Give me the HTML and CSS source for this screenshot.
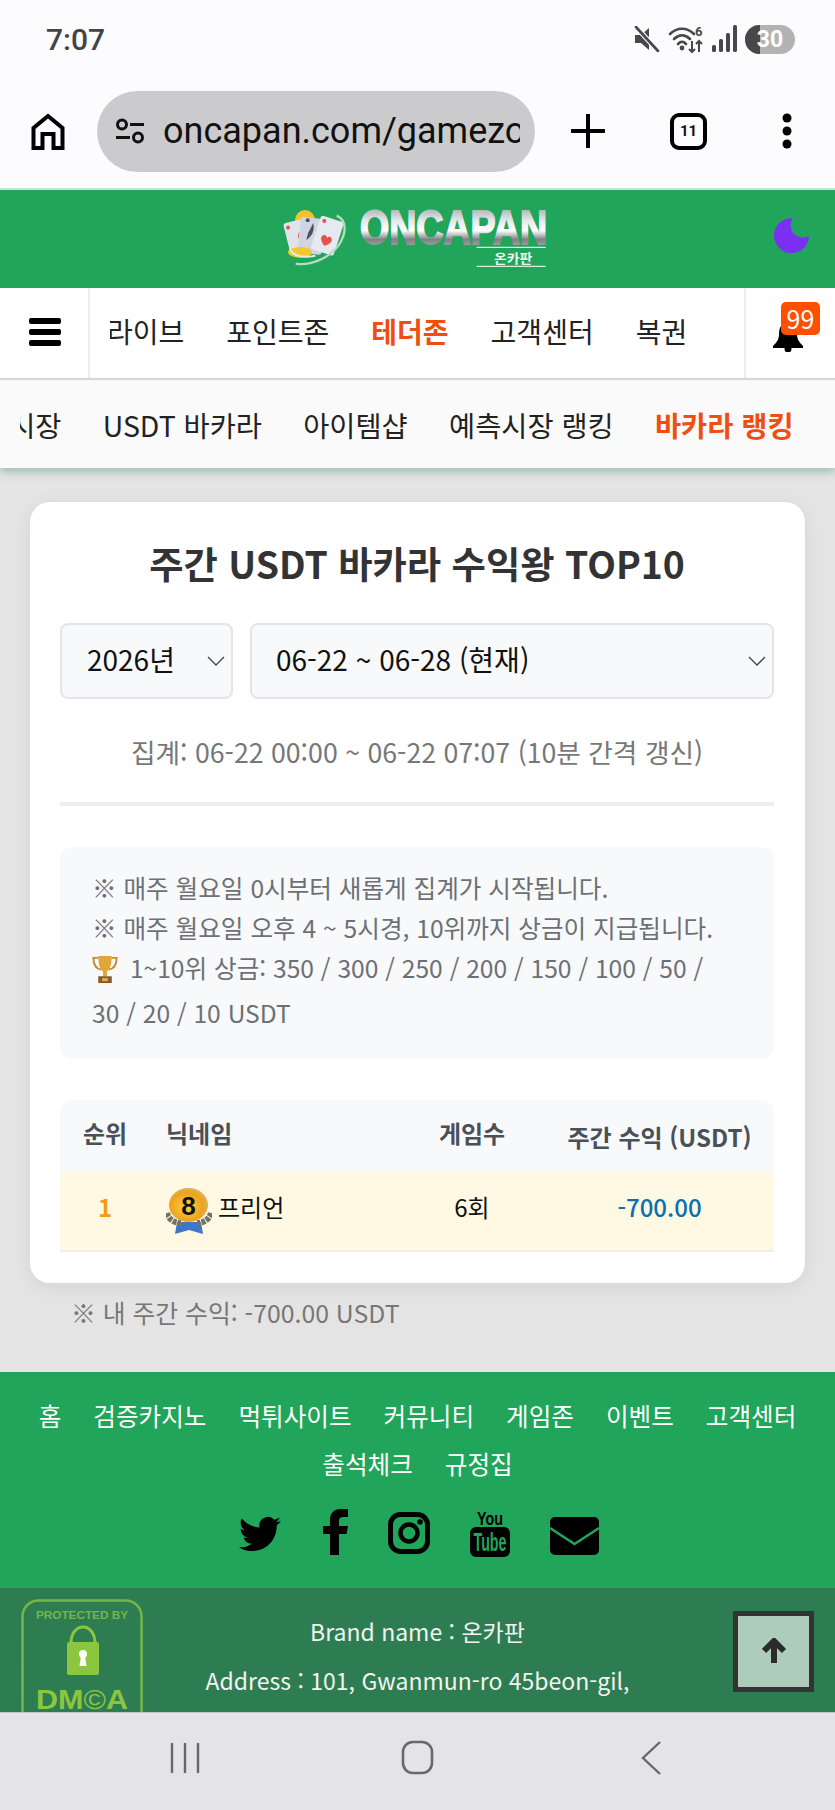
FILE: index.html
```html
<!DOCTYPE html>
<html lang="ko">
<head>
<meta charset="utf-8">
<title>주간 USDT 바카라 수익왕 TOP10</title>
<link rel="stylesheet" href="styles.css">
</head>
<body>
<div class="phone">
  <div class="statusbar">
    <span class="clock">7:07</span>
    <div class="status-icons">
      <svg class="ico-mute" viewBox="0 0 26 26" width="26" height="26"><path d="M1 9h6l8-7v22l-8-7H1z" fill="#484848"/><path d="M3 2l21 23" stroke="#fcfcff" stroke-width="5"/><path d="M2 1l22 24" stroke="#484848" stroke-width="2.6" stroke-linecap="round"/></svg>
      <svg class="ico-wifi" viewBox="0 0 36 30" width="36" height="30"><g fill="none" stroke="#484848" stroke-width="2.6" stroke-linecap="round"><path d="M2 10c7-7 17-7 24 0"/><path d="M6 15c5-5 11-5 16 0"/><path d="M10 20c3-3 5-3 8 0"/></g><circle cx="14" cy="24" r="2.4" fill="#484848"/><path d="M24 17v11m-3-3l3 3 3-3M31 28V17m-3 3l3-3 3 3" fill="none" stroke="#484848" stroke-width="2"/><text x="27" y="12" class="ico-wifi-num">6</text></svg>
      <svg class="ico-signal" viewBox="0 0 25 28" width="25" height="28"><g fill="#484848"><rect x="0" y="20" width="4" height="7" rx="1.5"/><rect x="7" y="14" width="4" height="13" rx="1.5"/><rect x="14" y="8" width="4" height="19" rx="1.5"/><rect x="21" y="0" width="4" height="27" rx="1.5"/></g></svg>
      <div class="battery"><span class="battery-level"></span><span class="battery-num">30</span></div>
    </div>
  </div>

  <div class="toolbar">
    <svg class="tool-home" viewBox="0 0 34 37" width="34" height="37"><path d="M2.5 35V15L17 3l14.500 12v20h-9V21h-11v14z" fill="none" stroke="#000" stroke-width="4" stroke-linejoin="miter"/></svg>
    <div class="urlbar">
      <svg viewBox="0 0 30 26" width="30" height="26"><g fill="none" stroke="#111" stroke-width="3"><circle cx="7" cy="6.500" r="4.500"/><path d="M15 6.500h14M1 19.500h14"/><circle cx="23" cy="19.500" r="4.500"/></g></svg>
      <span class="urlbar-text">oncapan.com/gamezone/baccarat</span>
    </div>
    <svg class="tool-plus" viewBox="0 0 34 34" width="34" height="34"><path d="M17 1v32M1 17h32" stroke="#000" stroke-width="4" stroke-linecap="round"/></svg>
    <div class="tabcount">11</div>
    <svg class="tool-dots" viewBox="0 0 10 36" width="10" height="36"><circle cx="5" cy="5" r="4.500"/><circle cx="5" cy="18" r="4.500"/><circle cx="5" cy="31" r="4.500"/></svg>
  </div>

  <main class="viewport">
    <header class="site-header">
      <span></span>
      <svg class="logo" viewBox="0 0 900 240" width="300" height="80" role="img" aria-label="ONCAPAN">
        <defs>
          <linearGradient id="silver" x1="0" y1="0" x2="0" y2="1">
            <stop offset="0" stop-color="#8d9296"/><stop offset=".35" stop-color="#e3e6e8"/><stop offset=".55" stop-color="#ffffff"/><stop offset=".72" stop-color="#7d8286"/><stop offset="1" stop-color="#c4c8cb"/>
          </linearGradient>
        </defs>
        <circle cx="105" cy="75" r="30" fill="#f2c230"/>
        <g transform="rotate(-14 90 125)"><rect x="50" y="75" width="70" height="100" rx="8" fill="#dfe3ec"/><path d="M82 130c8-5 10-15 8-20l-8 20z" fill="#e2574c"/><circle cx="62" cy="90" r="6" fill="#e4534a"/></g>
        <rect x="88" y="68" width="72" height="108" rx="8" fill="#cfd5e2" transform="rotate(6 120 120)"/>
        <path d="M115 112c8-12 14-28 14-28s5 12 0 26-16 22-20 24z" fill="#4a5163"/>
        <circle cx="113" cy="76" r="6" fill="#4a5163"/>
        <g transform="rotate(18 175 125)"><rect x="135" y="70" width="72" height="106" rx="8" fill="#e6e9f0"/><path d="M172 155c-14-10-20-20-14-28 5-6 12-3 14 3 2-6 9-9 14-3 6 8 0 18-14 28z" fill="#e4534a"/><circle cx="149" cy="84" r="6" fill="#e4534a"/></g>
        <ellipse cx="90" cy="172" rx="36" ry="16" fill="#f4c72f"/>
        <path d="M200 62c30 14 32 50 5 90-26 36-84 62-128 54" fill="none" stroke="#b5dcc0" stroke-width="7"/>
        <path d="M60 160c5 22 36 30 76 22" fill="none" stroke="#dff0e2" stroke-width="6"/>
        <text x="270" y="148" class="logo-word" textLength="561" lengthAdjust="spacingAndGlyphs" fill="url(#silver)" stroke="url(#silver)">ONCAPAN</text>
        <path d="M620 157h207M620 214h207" stroke="#d8f0df" stroke-width="4"/>
        <text x="672" y="204" class="logo-kr" textLength="115" lengthAdjust="spacingAndGlyphs">온카판</text>
      </svg>
      <svg class="moon" viewBox="0 0 36 36" width="36" height="36"><path d="M19 .2A17.500 17.500 0 1 0 35 18 12.200 12.200 0 0 1 19 .2z" fill="#7b2ff2"/></svg>
    </header>

    <nav class="mainnav">
      <button class="menu-btn" aria-label="메뉴"><span></span><span></span><span></span></button>
      <div class="mainnav-scroll">
        <a class="nav-first">라이브</a><a>포인트존</a><a class="hot">테더존</a><a>고객센터</a><a>복권</a>
      </div>
      <div class="bell-cell">
        <svg viewBox="0 0 34 32" width="34" height="32"><path d="M17 2c-6 0-9 5-9 12 0 5-2 8-6 12v2h30v-2c-4-4-6-7-6-12 0-7-3-12-9-12z" fill="#000"/><circle cx="17" cy="29" r="3.500" fill="#000"/></svg>
        <span class="badge">99</span>
      </div>
    </nav>

    <nav class="subnav">
      <div class="subnav-scroll">
        <a class="sub-first">예측시장</a><a>USDT 바카라</a><a>아이템샵</a><a>예측시장 랭킹</a><a class="hot">바카라 랭킹</a>
      </div>
    </nav>

    <section class="card">
      <h1 class="title">주간 USDT 바카라 수익왕 TOP10</h1>
      <div class="filters">
        <div class="select-wrap year">
          <select><option>2026년</option></select>
          <svg viewBox="0 0 18 10" width="18" height="10"><path d="M1 1l8 8 8-8" fill="none" stroke="#444" stroke-width="1.300"/></svg>
        </div>
        <div class="select-wrap week">
          <select><option>06-22 ~ 06-28 (현재)</option></select>
          <svg viewBox="0 0 18 10" width="18" height="10"><path d="M1 1l8 8 8-8" fill="none" stroke="#444" stroke-width="1.300"/></svg>
        </div>
      </div>
      <p class="period">집계: 06-22 00:00 ~ 06-22 07:07 (10분 간격 갱신)</p>
      <hr class="divider">
      <div class="notice">
        <p>※ 매주 월요일 0시부터 새롭게 집계가 시작됩니다.</p>
        <p>※ 매주 월요일 오후 4 ~ 5시경, 10위까지 상금이 지급됩니다.</p>
        <p class="prize"><svg class="trophy" viewBox="0 0 26 30" width="26" height="29"><path d="M6 3H1c0 7 2 11 8 12M20 3h5c0 7-2 11-8 12" fill="none" stroke="#c98a2b" stroke-width="2"/><path d="M6 1h14c0 9-2 14-5 16v5h-4v-5C8 15 6 10 6 1z" fill="#e0a63c"/><rect x="6" y="22" width="14" height="7" fill="#8a5a22"/><rect x="10" y="24" width="6" height="3" fill="#e0b050"/></svg> 1~10위 상금: 350 / 300 / 250 / 200 / 150 / 100 / 50 / 30 / 20 / 10 USDT</p>
      </div>
      <table class="rank">
        <colgroup><col class="c-rank"><col class="c-nick"><col class="c-games"><col class="c-profit"></colgroup>
        <thead>
          <tr><th>순위</th><th class="nick">닉네임</th><th>게임수</th><th class="profit-head">주간 수익 (USDT)</th></tr>
        </thead>
        <tbody>
          <tr>
            <td class="pos">1</td>
            <td class="nick">
              <div class="player">
                <svg viewBox="0 0 46 47" width="46" height="47">
                  <defs><radialGradient id="gold" cx=".45" cy=".55" r=".6"><stop offset="0" stop-color="#ffd04a"/><stop offset=".7" stop-color="#eda31b"/><stop offset="1" stop-color="#d8b878"/></radialGradient></defs>
                  <path d="M11 34l-2 12 14-4 14 4-2-12z" fill="#3f76c9"/>
                  <path d="M1 25c2 7 8 10 14 10M45 25c-2 7-8 10-14 10" fill="none" stroke="#6f7466" stroke-width="6" stroke-dasharray="4 1"/>
                  <ellipse cx="22.500" cy="17" rx="19.500" ry="17" fill="url(#gold)"/>
                  <text x="22.500" y="27" class="medal-num">8</text>
                </svg>
                <span>프리언</span>
              </div>
            </td>
            <td>6회</td>
            <td class="amount">-700.00</td>
          </tr>
        </tbody>
      </table>
    </section>

    <p class="my-profit">※ 내 주간 수익: -700.00 USDT</p>

    <footer class="footer">
      <div class="footer-links">
        <a>홈</a><a>검증카지노</a><a>먹튀사이트</a><a>커뮤니티</a><a>게임존</a><a>이벤트</a><a>고객센터</a><a>출석체크</a><a>규정집</a>
      </div>
      <div class="socials">
        <svg class="s-tw" viewBox="0 0 24 24" width="42" height="42"><path d="M23.953 4.57a10 10 0 01-2.825.775 4.958 4.958 0 002.163-2.723c-.951.555-2.005.959-3.127 1.184a4.92 4.92 0 00-8.384 4.482C7.69 8.095 4.067 6.13 1.64 3.162a4.822 4.822 0 00-.666 2.475c0 1.71.87 3.213 2.188 4.096a4.904 4.904 0 01-2.228-.616v.06a4.923 4.923 0 003.946 4.827 4.996 4.996 0 01-2.212.085 4.936 4.936 0 004.604 3.417 9.867 9.867 0 01-6.102 2.105c-.39 0-.779-.023-1.17-.067a13.995 13.995 0 007.557 2.209c9.053 0 13.998-7.496 13.998-13.985 0-.21 0-.42-.015-.63A9.935 9.935 0 0024 4.59z"/></svg>
        <svg class="s-fb" viewBox="0 0 25 46" width="25" height="46"><path d="M7 46V25H0v-8h7v-6C7 4 11 0 17.500 0H25v8h-5c-3 0-4 1.500-4 4v5h9l-1.500 8H16v21z"/></svg>
        <svg class="s-ig" viewBox="0 0 42 42" width="42" height="42"><rect x="2.500" y="2.500" width="37" height="37" rx="10" fill="none" stroke="#000" stroke-width="5"/><circle cx="21" cy="21" r="8.500" fill="none" stroke="#000" stroke-width="4.500"/><circle cx="32" cy="10" r="2.800"/></svg>
        <svg class="s-yt" viewBox="0 0 40 50" width="40" height="50"><text x="20" y="18" class="yt-you" textLength="26" lengthAdjust="spacingAndGlyphs">You</text><rect x="0" y="20" width="40" height="30" rx="6"/><text x="20" y="44" class="yt-tube" textLength="33" lengthAdjust="spacingAndGlyphs">Tube</text></svg>
        <svg class="s-ml" viewBox="0 0 49 38" width="49" height="38"><rect width="49" height="38" rx="5"/><path d="M0 11l24.500 16L49 11" fill="none" stroke="#20a55a" stroke-width="2.500"/></svg>
      </div>
    </footer>

    <div class="legal">
      <svg class="dmca" viewBox="0 0 122 125" width="122" height="125">
        <rect x="1.500" y="1.500" width="119" height="150" rx="16" fill="none" stroke="#74b648" stroke-width="2.500"/>
        <text x="15" y="20" class="dmca-top" textLength="92" lengthAdjust="spacingAndGlyphs">PROTECTED BY</text>
        <path d="M50 43c1-20 23-20 24 0" fill="none" stroke="#8cc63f" stroke-width="3"/>
        <rect x="46" y="43" width="32" height="33" rx="2" fill="#8cc63f"/>
        <circle cx="62" cy="55" r="4" fill="#fff"/><path d="M60 57h4l1.500 10h-7z" fill="#fff"/>
        <text x="15" y="110" class="dmca-word" textLength="92" lengthAdjust="spacingAndGlyphs">DM<tspan class="dmca-c">©</tspan>A</text>
      </svg>
      <div class="legal-text">
        <p>Brand name : 온카판</p>
        <p>Address : 101, Gwanmun-ro 45beon-gil,</p>
      </div>
    </div>
  </main>

  <nav class="sysnav">
    <svg viewBox="0 0 30 32" width="30" height="32"><path d="M2 1v30M15 1v30M28 1v30" stroke="#66686c" stroke-width="2.400"/></svg>
    <svg class="sys-home" viewBox="0 0 33 35" width="33" height="35"><rect x="2" y="2" width="29" height="31" rx="10" fill="none" stroke="#66686c" stroke-width="2.600"/></svg>
    <svg viewBox="0 0 21 34" width="21" height="34"><path d="M19 1L2 17l17 16" fill="none" stroke="#66686c" stroke-width="2.400"/></svg>
  </nav>

  <button class="to-top" aria-label="맨 위로"><svg viewBox="0 0 28 28" width="28" height="28"><path d="M14 25V4M4 13l10-10 10 10" fill="none" stroke="#2b2b2b" stroke-width="6"/></svg></button>
</div>
</body>
</html>
```

FILE: styles.css
```css
* { box-sizing: border-box; }
html, body { margin: 0; padding: 0; }
body { font-family: "Noto Sans CJK KR", "Noto Sans", sans-serif; color: #111; background: #e4e4e4; }
p, h1 { margin: 0; }
a { color: inherit; text-decoration: none; }

.phone { position: relative; width: 835px; height: 1810px; display: flex; flex-direction: column; overflow: hidden; }

.statusbar { height: 70px; flex: none; background: #fcfcff; display: flex; align-items: center; justify-content: space-between; padding: 0 40px 0 46px; }
.clock { font-family: Roboto, sans-serif; font-weight: 500; font-size: 30px; color: #444; padding-top: 8px; }
.status-icons { display: flex; align-items: center; gap: 8px; padding-top: 8px; }
.ico-wifi-num { font-family: Roboto, sans-serif; font-size: 13px; font-weight: 700; fill: #484848; }
.battery { position: relative; width: 50px; height: 29px; border-radius: 15px; background: #b3b3b3; overflow: hidden; display: flex; align-items: center; justify-content: center; }
.battery-level { position: absolute; left: 0; top: 0; bottom: 0; width: 15px; background: #484848; }
.battery-num { position: relative; font-family: Roboto, sans-serif; font-weight: 700; font-size: 23px; color: #fff; }

.toolbar { height: 118px; flex: none; background: #fcfcff; display: flex; align-items: center; padding: 4px 0 0 31px; }
.urlbar { width: 438px; height: 81px; margin-left: 32px; border-radius: 41px; background: #cbcbcd; display: flex; align-items: center; padding: 0 15px 0 18px; gap: 18px; overflow: hidden; }
.urlbar svg { flex: none; }
.urlbar-text { font-family: Roboto, sans-serif; font-size: 36px; color: #111; white-space: nowrap; overflow: hidden; flex: 1; }
.tool-plus { margin-left: 36px; }
.tabcount { width: 37px; height: 37px; margin-left: 65px; border: 4px solid #000; border-radius: 9px; display: flex; align-items: center; justify-content: center; font-family: Roboto, sans-serif; font-weight: 700; font-size: 15px; }
.tool-dots { margin-left: 75px; }

.viewport { flex: 1; min-height: 0; overflow: hidden; background: #e4e4e4; }

.site-header { height: 100px; background: #20a55a; border-top: 2px solid #bfe6cf; display: grid; grid-template-columns: 1fr auto 1fr; align-items: center; }
.logo { display: block; margin: 0 0 8px 5px; }
.moon { justify-self: end; margin: 0 25px 6px 0; }
.logo-word { font-family: "Liberation Sans", sans-serif; font-weight: 700; font-size: 144px; stroke-width: 6; }
.logo-kr { font-family: "Noto Sans CJK KR", sans-serif; font-weight: 700; font-size: 38px; fill: #eef7f0; }

.mainnav { height: 92px; background: #fff; border-bottom: 2px solid #dcdcdc; display: flex; align-items: stretch; }
.menu-btn { width: 90px; flex: none; background: #fff; border: 0; border-right: 2px solid #ececec; padding: 0 0 2px 2px; display: flex; flex-direction: column; align-items: center; justify-content: center; gap: 5px; }
.menu-btn span { display: block; width: 32px; height: 6px; border-radius: 2px; background: #000; }
.mainnav-scroll { flex: 1; min-width: 0; margin-left: 20px; overflow: hidden; display: flex; align-items: center; gap: 42px; padding: 0 0 4px; font-size: 28px; color: #222; white-space: nowrap; }
.nav-first { margin-left: -3px; }
.hot { font-weight: 700; color: #ee4f10; }
.bell-cell { position: relative; width: 91px; flex: none; border-left: 2px solid #ececec; padding: 32px 0 0 25px; }
.bell-cell svg { display: block; }
.badge { position: absolute; left: 35px; top: 14px; width: 39px; height: 33px; border-radius: 5px; background: #ff5000; color: #fff; font-size: 25px; line-height: 32px; text-align: center; }

.subnav { position: relative; height: 88px; background: #fafafa; box-shadow: 0 4px 8px rgba(30, 130, 80, .35); padding-left: 20px; }
.subnav-scroll { height: 100%; overflow: hidden; display: flex; align-items: center; gap: 41.300px; font-size: 28.400px; color: #222; white-space: nowrap; }
.sub-first { margin-left: -63px; }

.card { margin: 34px 30px 0; padding: 38px 31px 31px 30px; background: #fff; border-radius: 20px; box-shadow: 0 4px 18px rgba(0, 0, 0, .07); }
.title { font-size: 37.300px; line-height: 46px; font-weight: 700; text-align: center; color: #333; }
.filters { display: flex; gap: 17px; margin-top: 37px; }
.select-wrap { position: relative; height: 76px; }
.year { width: 173px; flex: none; }
.week { flex: 1; }
.select-wrap select { appearance: none; width: 100%; height: 100%; border: 2px solid #e3e5e8; border-radius: 8px; background: #f8f9fa; font: inherit; font-size: 28px; color: #111; padding: 0 0 4px 24px; }
.year select { padding-left: 25px; }
.select-wrap svg { position: absolute; right: 8px; top: 33px; }
.period { margin-top: 35px; font-size: 26.700px; line-height: 36px; color: #777; text-align: center; }
.divider { height: 4px; margin: 32px 0 41px; border: 0; background: #eceef0; }
.notice { height: 212px; padding: 20px 41px 0 32px; background: #f8f9fa; border-radius: 12px; font-size: 24.600px; line-height: 40px; color: #6c7075; }
.trophy { vertical-align: -14px; margin: 0 5px 8px 0; }
.rank { width: 100%; margin-top: 41px; border-collapse: collapse; table-layout: fixed; font-size: 24px; }
.c-rank { width: 90px; }
.c-games { width: 146px; }
.c-profit { width: 229px; }
.rank th { height: 72px; background: #f8f9fa; color: #495057; font-weight: 700; text-align: center; padding: 0 0 7px; }
.rank th:first-child { border-top-left-radius: 12px; }
.rank th:last-child { border-top-right-radius: 12px; }
.rank .profit-head { padding: 0; }
.rank td { height: 79px; background: #fff9e3; border-bottom: 2px solid #eeeeea; text-align: center; padding: 0 0 10px; }
.rank .nick { text-align: left; padding-left: 16px; }
.rank td.nick { padding-bottom: 0; }
.pos { font-weight: 700; color: #f39c12; }
.amount { font-weight: 500; color: #0b6fae; }
.player { display: flex; align-items: center; gap: 6px; }
.player svg { flex: none; }
.player span { margin-bottom: 9px; }
.medal-num { font-family: "Liberation Sans", sans-serif; font-weight: 700; font-size: 26px; text-anchor: middle; fill: #111; }
.my-profit { margin: 11px 0 42px; padding-left: 71px; font-size: 24.800px; line-height: 36px; color: #777; }

.footer { background: #20a55a; padding: 19px 0 30px; }
.footer-links { display: flex; flex-wrap: wrap; justify-content: center; gap: 0 32px; font-size: 24.600px; line-height: 48px; color: #fff; }
.socials { display: flex; align-items: flex-end; justify-content: center; gap: 40px; margin-top: 20px; padding-left: 2px; height: 51px; }
.s-tw { margin-bottom: 3px; }
.s-fb { margin-bottom: 3px; margin-left: 2px; }
.s-ig { margin-bottom: 4px; }
.s-yt { margin-bottom: 1px; }
.yt-you { font-family: "Liberation Sans", sans-serif; font-weight: 700; font-size: 19px; text-anchor: middle; fill: #000; }
.yt-tube { font-family: "Liberation Sans", sans-serif; font-weight: 700; font-size: 26px; text-anchor: middle; fill: #20a55a; }
.s-ml { margin-bottom: 3px; }

.legal { display: grid; grid-template-columns: 143px 1fr 143px; height: 240px; background: #2e7d52; }
.dmca { margin: 11px 0 0 21px; }
.dmca-top { font-family: "Liberation Sans", sans-serif; font-weight: 700; font-size: 11px; fill: #74b648; }
.dmca-word { font-family: "Liberation Sans", sans-serif; font-weight: 700; font-size: 27px; fill: #8cc63f; }
.dmca-c { font-weight: 400; }
.legal-text { padding-top: 19px; font-size: 23px; line-height: 49px; color: #f0f4f1; text-align: center; }

.sysnav { height: 98px; flex: none; background: #e4e4e6; display: flex; align-items: center; justify-content: space-between; padding: 0 173px 8px 170px; border-top: 1px solid #b9c9bf; }
.sys-home { margin-right: 7px; }

.to-top { position: absolute; left: 733px; top: 1611px; width: 81px; height: 81px; border: 5px solid #333; background: #adccb9; padding: 0; display: flex; align-items: center; justify-content: center; }
```
